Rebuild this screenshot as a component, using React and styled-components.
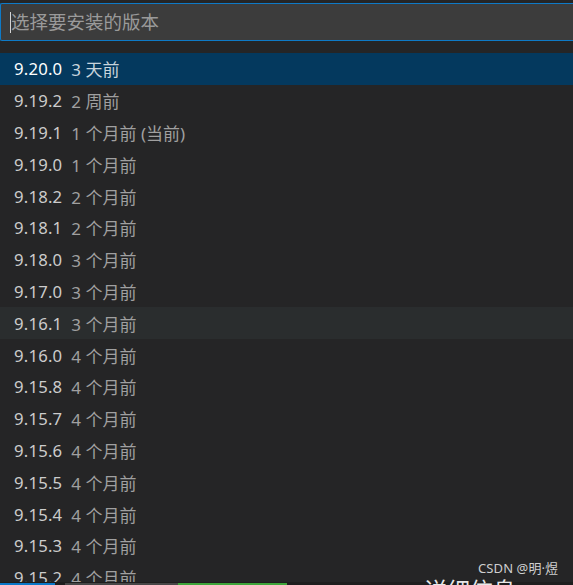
import React from "react";
import styled, { createGlobalStyle } from "styled-components";

const Global = createGlobalStyle`
  html, body { margin: 0; padding: 0; background: #252526; }
  body { font-family: "Noto Sans", "Noto Sans CJK SC", sans-serif; }
`;

const Frame = styled.div`
  position: relative;
  width: 573px;
  height: 585px;
  background: #252526;
  overflow: hidden;
  display: flex;
  flex-direction: column;
  padding-top: 3px;
  box-sizing: border-box;
`;

const InputBox = styled.div`
  height: 38px;
  box-sizing: border-box;
  background: #3c3c3c;
  border: 1px solid #0e7ac7;
  border-right: none;
  border-radius: 2px 0 0 2px;
  display: flex;
  align-items: center;
  padding-left: 9px;
  flex-shrink: 0;
`;

const Caret = styled.span`
  width: 1px;
  height: 21px;
  background: #d4d4d4;
`;

const Placeholder = styled.span`
  font-family: "Noto Sans CJK SC", sans-serif;
  font-size: 18.5px;
  color: #9a9a9a;
  line-height: 1;
  margin-top: -1px;
`;

const List = styled.div`
  margin-top: 12px;
  height: 529px;
  overflow: hidden;
  flex-shrink: 0;
`;

const Row = styled.div`
  height: 31.8px;
  display: flex;
  align-items: center;
  padding-left: 14px;
  gap: 9px;
  background: ${(p) => (p.$selected ? "#04395e" : p.$hover ? "#2a2d2e" : "transparent")};
  font-size: 16.7px;
  white-space: nowrap;
`;

const Version = styled.span`
  color: ${(p) => (p.$selected ? "#ffffff" : "#cccccc")};
  letter-spacing: 0.2px;
`;

const Desc = styled.span`
  font-family: "Noto Sans", "Noto Sans CJK SC", sans-serif;
  font-size: 17px;
  color: ${(p) => (p.$selected ? "#c8d4dc" : "#a0a0a0")};
`;

const Footer = styled.div`
  position: relative;
  height: 3px;
  background: #1e1e1e;
  flex-shrink: 0;
`;

const Segment = styled.div`
  position: absolute;
  top: 1px;
  bottom: 0;
  left: ${(p) => p.$left}px;
  width: ${(p) => p.$width}px;
  background: ${(p) => p.$color};
`;

const Watermark = styled.div`
  position: absolute;
  left: 478px;
  top: 562px;
  font-family: "Noto Sans", "Noto Sans CJK SC", sans-serif;
  font-size: 13px;
  line-height: 1;
  color: #cfcfcf;
  letter-spacing: 0.1px;
`;

const BehindText = styled.div`
  position: absolute;
  left: 424px;
  top: 578px;
  font-family: "Noto Sans CJK SC", sans-serif;
  font-size: 23px;
  line-height: 1;
  color: #e8e8e8;
`;

const versions = [
  ["9.20.0", "3 天前"],
  ["9.19.2", "2 周前"],
  ["9.19.1", "1 个月前 (当前)"],
  ["9.19.0", "1 个月前"],
  ["9.18.2", "2 个月前"],
  ["9.18.1", "2 个月前"],
  ["9.18.0", "3 个月前"],
  ["9.17.0", "3 个月前"],
  ["9.16.1", "3 个月前"],
  ["9.16.0", "4 个月前"],
  ["9.15.8", "4 个月前"],
  ["9.15.7", "4 个月前"],
  ["9.15.6", "4 个月前"],
  ["9.15.5", "4 个月前"],
  ["9.15.4", "4 个月前"],
  ["9.15.3", "4 个月前"],
  ["9.15.2", "4 个月前"],
];

export default function App() {
  return (
    <>
      <Global />
      <Frame>
        <InputBox>
          <Caret />
          <Placeholder>选择要安装的版本</Placeholder>
        </InputBox>
        <List>
          {versions.map(([v, d], i) => (
            <Row key={v} $selected={i === 0} $hover={i === 8}>
              <Version $selected={i === 0}>{v}</Version>
              <Desc $selected={i === 0}>{d}</Desc>
            </Row>
          ))}
        </List>
        <Footer>
          <Segment $left={0} $width={55} $color="#0a78c8" />
          <Segment $left={65} $width={113} $color="#474747" />
          <Segment $left={178} $width={109} $color="#3ea53a" />
        </Footer>
        <BehindText>详细信息</BehindText>
        <Watermark>CSDN @明·煜</Watermark>
      </Frame>
    </>
  );
}
